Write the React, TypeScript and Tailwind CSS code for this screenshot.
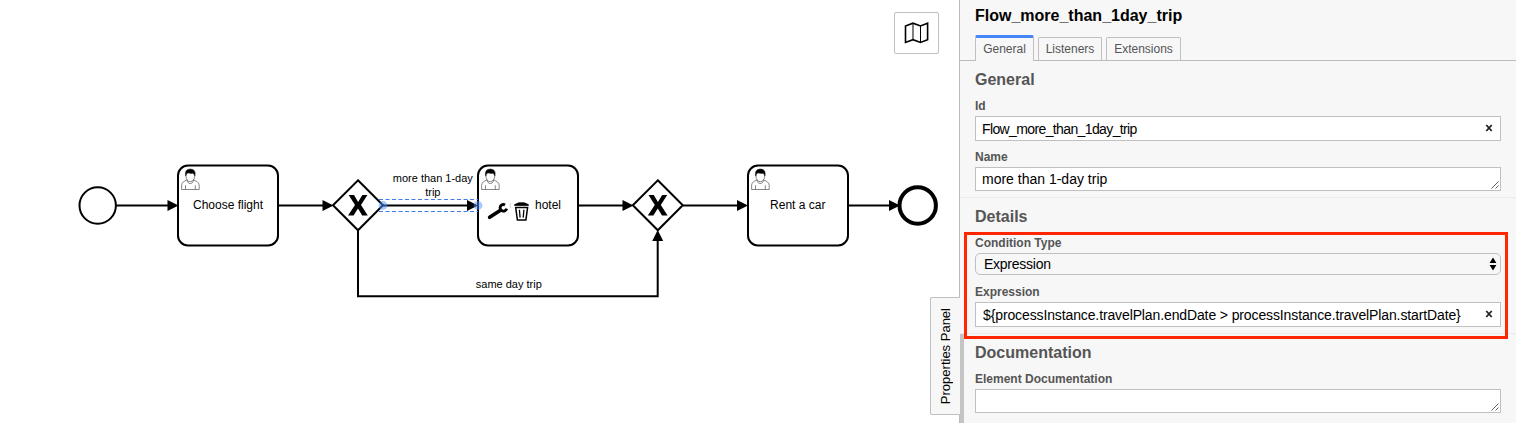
import React from "react";

const FONT = "font-['Liberation_Sans',Arial,sans-serif]";

function Task({ x, y }: { x: number; y: number }) {
  return (
    <g transform={`translate(${x} ${y})`}>
      <rect width="100" height="80" rx="10" fill="#fff" stroke="#000" strokeWidth="2" />
      <g transform="translate(3.3 3.2)" fill="#fff" stroke="#222" strokeWidth="0.55">
        <path d="M5.8 11.2 C3 12.4 .6 13.4 .3 16.4 V20.8 H17.9 V16.4 C17.6 13.4 15 12.4 12.2 11.2 C12 16 6 16 5.8 11.2 Z" />
        <path d="M4.2 16.6 V20.6 M14 16.6 V20.6" fill="none" />
        <ellipse cx="9" cy="7.6" rx="4.3" ry="5.4" />
        <path fill="#000" d="M4.4 7.4 C3.4 3 5 .5 9 .4 C13 .5 14.6 3 13.6 7.4 C13.2 5.4 12.4 4.8 11.2 4.6 C9.5 5.4 8 3.8 6.4 4.4 C5.2 4.8 4.8 5.6 4.4 7.4 Z" />
      </g>
    </g>
  );
}

function Gateway({ cx }: { cx: number }) {
  return (
    <g transform={`translate(${cx} 205.3)`}>
      <path d="M0 -25 L25 0 L0 25 L-25 0 Z" fill="#fff" stroke="#000" strokeWidth="2" />
      <path d="M-9.3 -10.2 H-4 L0.1 -3.4 L4.4 -10.2 H9.4 L3 -.2 L9.8 10.2 H4.2 L0 3.3 L-4.5 10.2 H-10 L-3 -.2 Z" />
    </g>
  );
}

function Diagram() {
  return (
    <svg className="block h-[423px] w-[959px]" viewBox="0 0 959 423" fontFamily="'Liberation Sans', Arial, sans-serif">
      <g stroke="#000" strokeWidth="2" fill="none">
        <circle cx="97.7" cy="205.5" r="18.2" />
        <path d="M116 205.5H170M278 205.5H325M383 205.5H470M578 205.5H625M683 205.5H740M848 205.5H892M358 230V296.3H657.7V238" />
      </g>
      <path d="M178.5 205.5l-11 -5.5v11zM333.5 205.5l-11 -5.5v11zM478 205.5l-11 -5.5v11zM633.5 205.5l-11 -5.5v11zM748 205.5l-11 -5.5v11zM900 205.5l-11 -5.5v11zM657.7 230l-5.5 11h11z" />
      <Task x={178} y={165.5} />
      <Task x={478} y={165.5} />
      <Task x={748} y={165.5} />
      <Gateway cx={358} />
      <Gateway cx={657.8} />
      <circle cx="917.7" cy="205.5" r="18.2" fill="#fff" stroke="#000" strokeWidth="4" />
      <path d="M379 199.5H478M379 211.5H478" fill="none" stroke="#3f7cf0" strokeWidth="1" strokeDasharray="4 2.5" />
      <circle cx="383" cy="205.5" r="4.4" fill="#4d90ff" fillOpacity=".5" />
      <circle cx="478" cy="205.5" r="4.4" fill="#4d90ff" fillOpacity=".5" />
      <g>
        <path d="M489.6 217.3L500.5 210.2" stroke="#000" strokeWidth="3.6" strokeLinecap="round" />
        <path d="M505 204.9A3.3 3.3 0 1 0 506.6 208.6" fill="none" stroke="#000" strokeWidth="2.9" />
      </g>
      <g fill="none" stroke="#000">
        <path d="M514.6 205.4V204.6L518.8 202.8H524.2L528.4 204.6V205.4Z" fill="#000" strokeWidth=".8" />
        <path d="M515.7 207.6H527.6L525.9 219.9H517.4Z" strokeWidth="1.5" />
        <path d="M519.4 209.8L520.1 217.6M523.9 209.8L523.2 217.6" strokeWidth="1.3" />
      </g>
      <path d="M510.8 203.2Q509.3 205.5 510.8 207.8" fill="none" stroke="#ccc" />
      <g fontSize="12" textAnchor="middle">
        <text x="228" y="209" textLength="70">Choose flight</text>
        <text x="548" y="209" textLength="26">hotel</text>
        <text x="797.8" y="209" textLength="55.5">Rent a car</text>
      </g>
      <g fontSize="11" textAnchor="middle">
        <text x="432.8" y="182" textLength="80">more than 1-day</text>
        <text x="432.8" y="196">trip</text>
        <text x="508.8" y="288" textLength="66">same day trip</text>
      </g>
    </svg>
  );
}

function Label({ children }: { children: React.ReactNode }) {
  return <div className="h-[14px] text-[12px] font-bold leading-[14px] text-[#555]">{children}</div>;
}

function Heading({ children }: { children: React.ReactNode }) {
  return <h2 className="mb-[9px] h-[20px] text-[16px] font-bold leading-[20px] text-[#555]">{children}</h2>;
}

function Clear() {
  return (
    <svg className="mb-px h-[8px] w-[8px]" viewBox="0 0 8 8">
      <path d="M1.3 1L6.7 7M6.7 1L1.3 7" stroke="#222" strokeWidth="1.8" />
    </svg>
  );
}

function Grip() {
  return (
    <svg className="mb-px mr-px h-[8px] w-[8px] self-end" viewBox="0 0 8 8">
      <path d="M.5 7.5L7.5 .5M4.5 7.5L7.5 4.5" stroke="#555" strokeWidth=".9" />
    </svg>
  );
}

export default function App() {
  return (
    <div className={`relative flex h-[423px] w-[1516px] overflow-hidden bg-white text-black ${FONT}`}>
      <main className="w-[959px] shrink-0">
        <Diagram />
      </main>
      <button className="absolute left-[894px] top-[12px] flex h-[42px] w-[45px] items-center justify-center rounded-[2px] border border-[#c0c0c0] bg-white">
        <svg className="h-[22px] w-[25px]" viewBox="0 0 25 22" fill="none" stroke="#000">
          <path d="M1.5 4L9 1.2L16.5 3.9L23.6 1.2V17.7L16.5 20.4L9 17.7L1.5 20.4Z" strokeWidth="1.6" />
          <path d="M9 1.2V17.7M16.5 3.9V20.4" strokeWidth="1" />
        </svg>
      </button>

      <aside className="flex h-[423px] w-[557px] flex-col border-l border-[#bbb] bg-[#f7f7f7]">
        <h1 className="ml-[15px] mt-[6px] h-[20px] whitespace-nowrap text-[16px] font-bold leading-[20px]">Flow_more_than_1day_trip</h1>
        <nav className="mt-[9px] flex h-[26px] items-end border-b border-[#bbb] pl-[15px] text-[12px] text-[#555]">
          <span className="-mb-px flex h-[26px] w-[59px] items-center justify-center rounded-t-[2px] border-x border-t-[3px] border-x-[#c0c0c0] border-t-[#4387f8] bg-[#f7f7f7] pb-[2px]">General</span>
          <span className="ml-[4px] flex h-[23px] w-[64px] items-center justify-center rounded-t-[2px] border border-b-0 border-[#c0c0c0]">Listeners</span>
          <span className="ml-[4px] flex h-[23px] w-[75px] items-center justify-center rounded-t-[2px] border border-b-0 border-[#c0c0c0]">Extensions</span>
        </nav>

        <section className="h-[137px] border-b border-[#ebebeb] pl-[15px] pt-[9px]">
          <Heading>General</Heading>
          <Label>Id</Label>
          <div className="mt-[3px] flex h-[25px] w-[526px] items-center justify-between border border-[#c0c0c0] bg-white pl-[6px] pr-[7px] text-[14px]">
            <span className="w-[156px] whitespace-nowrap pt-[2px] tracking-[-0.62px]">Flow_more_than_1day_trip</span>
            <Clear />
          </div>
          <div className="mt-[9px]"><Label>Name</Label></div>
          <div className="mt-[3px] flex h-[24px] w-[526px] items-center justify-between border border-[#c0c0c0] bg-white pl-[6px] text-[14px]">
            <span>more than 1-day trip</span>
            <Grip />
          </div>
        </section>

        <section className="h-[136px] border-b border-[#ebebeb] pl-[15px] pt-[9px]">
          <Heading>Details</Heading>
          <Label>Condition Type</Label>
          <div className="mt-[3px] flex h-[22px] w-[526px] items-center justify-between rounded-[5px] border border-[#c0c0c0] pl-[8px] pr-[3px] text-[14px]">
            <span className="tracking-[-0.25px]">Expression</span>
            <svg className="h-[14px] w-[8px]" viewBox="0 0 8 14"><path d="M4 .6L7.4 6H.6ZM4 13.4L.6 8H7.4Z" /></svg>
          </div>
          <div className="mt-[10px]"><Label>Expression</Label></div>
          <div className="mt-[3px] flex h-[25px] w-[526px] items-center justify-between border border-[#c0c0c0] bg-white pl-[7px] pr-[7px] text-[14px]">
            <span className="whitespace-nowrap pt-[2px] tracking-[-0.12px]">{"${processInstance.travelPlan.endDate > processInstance.travelPlan.startDate}"}</span>
            <Clear />
          </div>
        </section>

        <section className="h-[89px] border-l-[4px] border-[#c4c4c4] pl-[11px] pt-[9px]">
          <Heading>Documentation</Heading>
          <Label>Element Documentation</Label>
          <div className="mt-[3px] flex h-[24px] w-[526px] justify-end border border-[#c0c0c0] bg-white">
            <Grip />
          </div>
        </section>
      </aside>

      <div className="absolute left-[930px] top-[297px] flex h-[118px] w-[30px] items-center justify-center rounded-l-[2px] border border-r-0 border-[#c0c0c0] bg-[#f7f7f7]">
        <span className="rotate-180 whitespace-nowrap text-[13px] leading-[16px] [writing-mode:vertical-rl]">Properties Panel</span>
      </div>
      <div className="absolute left-[964px] top-[232px] h-[107px] w-[544px] border-[3px] border-[#ff2600]" />
    </div>
  );
}
